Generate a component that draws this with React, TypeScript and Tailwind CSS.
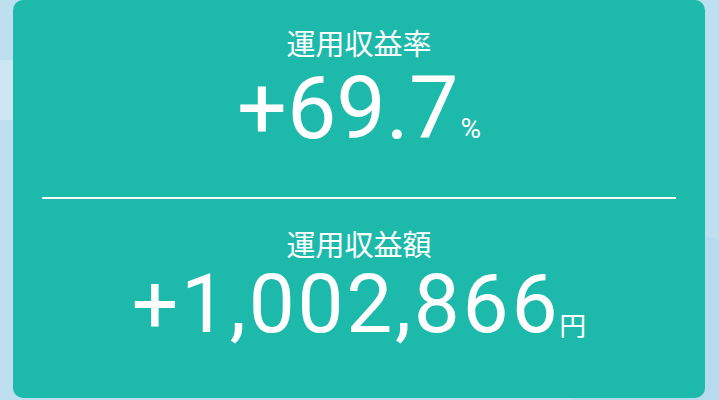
import React from "react";

const num = { fontFamily: "Roboto, 'Noto Sans', sans-serif" };
const jp = { fontFamily: "'Noto Sans CJK JP', 'Noto Sans', sans-serif" };

export default function App() {
  return (
    <div className="relative w-[719px] h-[400px] overflow-hidden bg-[#bddff0]">
      <div className="absolute left-[-60px] top-[60px] w-[110px] h-[60px] rounded-full bg-[#cbe7f3]" />
      <div className="absolute right-[-80px] top-[240px] w-[200px] h-[200px] rotate-[20deg] bg-[#b6dbee]" />
      <div className="relative ml-[13px] w-[692px] h-[398px] rounded-[10px] bg-[#1dbaab] flex flex-col text-white">
        <div className="h-[197px] flex flex-col items-center pt-[26px]">
          <div className="text-[29px] leading-[32px]" style={jp}>運用収益率</div>
          <div className="mt-[6px] flex items-baseline">
            <span className="text-[88px] leading-none" style={num}>+69.7</span>
            <span className="ml-[2px] text-[28px] leading-none" style={num}>%</span>
          </div>
        </div>
        <div className="mx-[29px] h-[2px] bg-white" />
        <div className="flex-1 flex flex-col items-center pt-[28px]">
          <div className="text-[29px] leading-[32px]" style={jp}>運用収益額</div>
          <div className="mt-[4px] flex items-baseline">
            <span className="text-[82px] leading-none tracking-[2.7px]" style={num}>+1,002,866</span>
            <span className="ml-[-1px] text-[27px] leading-none translate-y-[4px]" style={jp}>円</span>
          </div>
        </div>
      </div>
    </div>
  );
}
